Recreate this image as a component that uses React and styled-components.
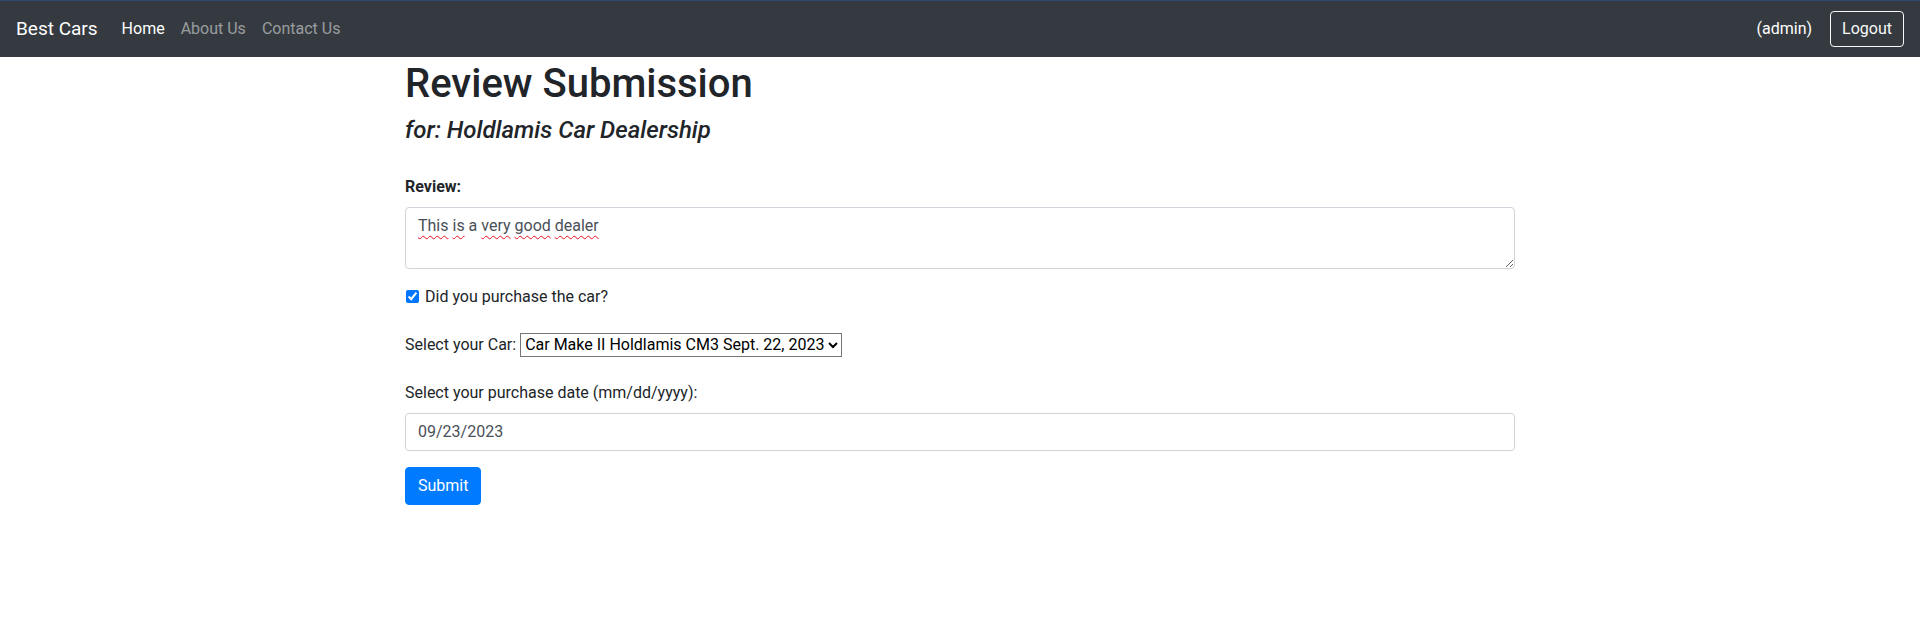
import React from 'react'
import styled, { createGlobalStyle } from 'styled-components'

const GlobalStyle = createGlobalStyle`
  html, body {
    margin: 0;
    padding: 0;
    background: #fff;
  }
  body {
    font-family: Roboto, "Noto Sans", "Liberation Sans", sans-serif;
    font-size: 16px;
    line-height: 1.5;
    color: #212529;
  }
  * {
    box-sizing: border-box;
  }
`

const Navbar = styled.nav`
  display: flex;
  align-items: center;
  justify-content: space-between;
  height: 57px;
  padding: 0 16px;
  background-color: #343a40;
  border-top: 1px solid #2f4c6e;
`

const NavLeft = styled.div`
  display: flex;
  align-items: center;
`

const Brand = styled.a`
  font-size: 19px;
  color: #fff;
  margin-right: 16px;
  text-decoration: none;
`

const NavLink = styled.a`
  padding: 8px;
  font-size: 16px;
  color: ${(p) => (p.active ? '#fff' : 'rgba(255,255,255,.5)')};
  text-decoration: none;
`

const NavRight = styled.div`
  display: flex;
  align-items: center;
  gap: 18px;
  color: #fff;
  font-size: 16px;
`

const OutlineButton = styled.button`
  font-family: inherit;
  font-size: 16px;
  line-height: 1.5;
  color: #f8f9fa;
  background: transparent;
  border: 1px solid #f8f9fa;
  border-radius: 4px;
  padding: 5px 11px;
`

const Container = styled.main`
  width: 1140px;
  margin: 0 auto;
  padding: 0 15px;
`

const Title = styled.h1`
  font-size: 40px;
  font-weight: 500;
  line-height: 1.2;
  margin: 0 0 8px;
  padding-top: 3px;
`

const Subtitle = styled.h4`
  font-size: 24px;
  font-weight: 500;
  font-style: italic;
  line-height: 1.2;
  margin: 0;
`

const Form = styled.form`
  display: flex;
  flex-direction: column;
  padding-top: 30px;
`

const Label = styled.label`
  display: block;
  font-weight: ${(p) => (p.bold ? 700 : 400)};
  margin-bottom: 8px;
`

const ReviewBox = styled.div`
  height: 62px;
  padding: 6px 12px;
  border: 1px solid #ced4da;
  border-radius: 4px;
  color: #495057;
  overflow: auto;
  resize: vertical;
  margin-bottom: 16px;
`

const Misspelled = styled.span`
  text-decoration: underline wavy #e81123;
  text-decoration-thickness: 1px;
  text-underline-offset: 4px;
  text-decoration-skip-ink: none;
`

const CheckRow = styled.label`
  display: flex;
  align-items: center;
  gap: 6px;
  height: 24px;
  margin-bottom: 24px;
  input {
    margin: 0 0 0 1px;
    width: 13px;
    height: 13px;
  }
`

const SelectRow = styled.div`
  display: flex;
  align-items: center;
  gap: 4px;
  margin-bottom: 24px;
`

const Select = styled.select`
  font-family: inherit;
  font-size: 16px;
  height: 24px;
  color: #000;
  border: 1px solid #767676;
  border-radius: 0;
  background: #fff;
`

const TextInput = styled.input`
  width: 100%;
  height: 38px;
  padding: 6px 12px;
  font-family: inherit;
  font-size: 16px;
  color: #495057;
  border: 1px solid #ced4da;
  border-radius: 4px;
  margin-bottom: 16px;
`

const SubmitButton = styled.button`
  align-self: flex-start;
  font-family: inherit;
  font-size: 16px;
  line-height: 1.5;
  color: #fff;
  background-color: #007bff;
  border: 1px solid #007bff;
  border-radius: 4px;
  padding: 6px 12px;
`

export default function App() {
  return (
    <>
      <GlobalStyle />
      <Navbar>
        <NavLeft>
          <Brand href="#">Best Cars</Brand>
          <NavLink href="#" active>
            Home
          </NavLink>
          <NavLink href="#">About Us</NavLink>
          <NavLink href="#">Contact Us</NavLink>
        </NavLeft>
        <NavRight>
          <span>(admin)</span>
          <OutlineButton>Logout</OutlineButton>
        </NavRight>
      </Navbar>
      <Container>
        <Title>Review Submission</Title>
        <Subtitle>for: Holdlamis Car Dealership</Subtitle>
        <Form onSubmit={(e) => e.preventDefault()}>
          <Label bold>Review:</Label>
          <ReviewBox>
            <Misspelled>This</Misspelled> <Misspelled>is</Misspelled> a{' '}
            <Misspelled>very</Misspelled> <Misspelled>good</Misspelled>{' '}
            <Misspelled>dealer</Misspelled>
          </ReviewBox>
          <CheckRow>
            <input type="checkbox" defaultChecked />
            Did you purchase the car?
          </CheckRow>
          <SelectRow>
            <span>Select your Car:</span>
            <Select defaultValue="cm3">
              <option value="cm3">Car Make II Holdlamis CM3 Sept. 22, 2023</option>
            </Select>
          </SelectRow>
          <Label>Select your purchase date (mm/dd/yyyy):</Label>
          <TextInput type="text" defaultValue="09/23/2023" />
          <SubmitButton type="submit">Submit</SubmitButton>
        </Form>
      </Container>
    </>
  )
}
